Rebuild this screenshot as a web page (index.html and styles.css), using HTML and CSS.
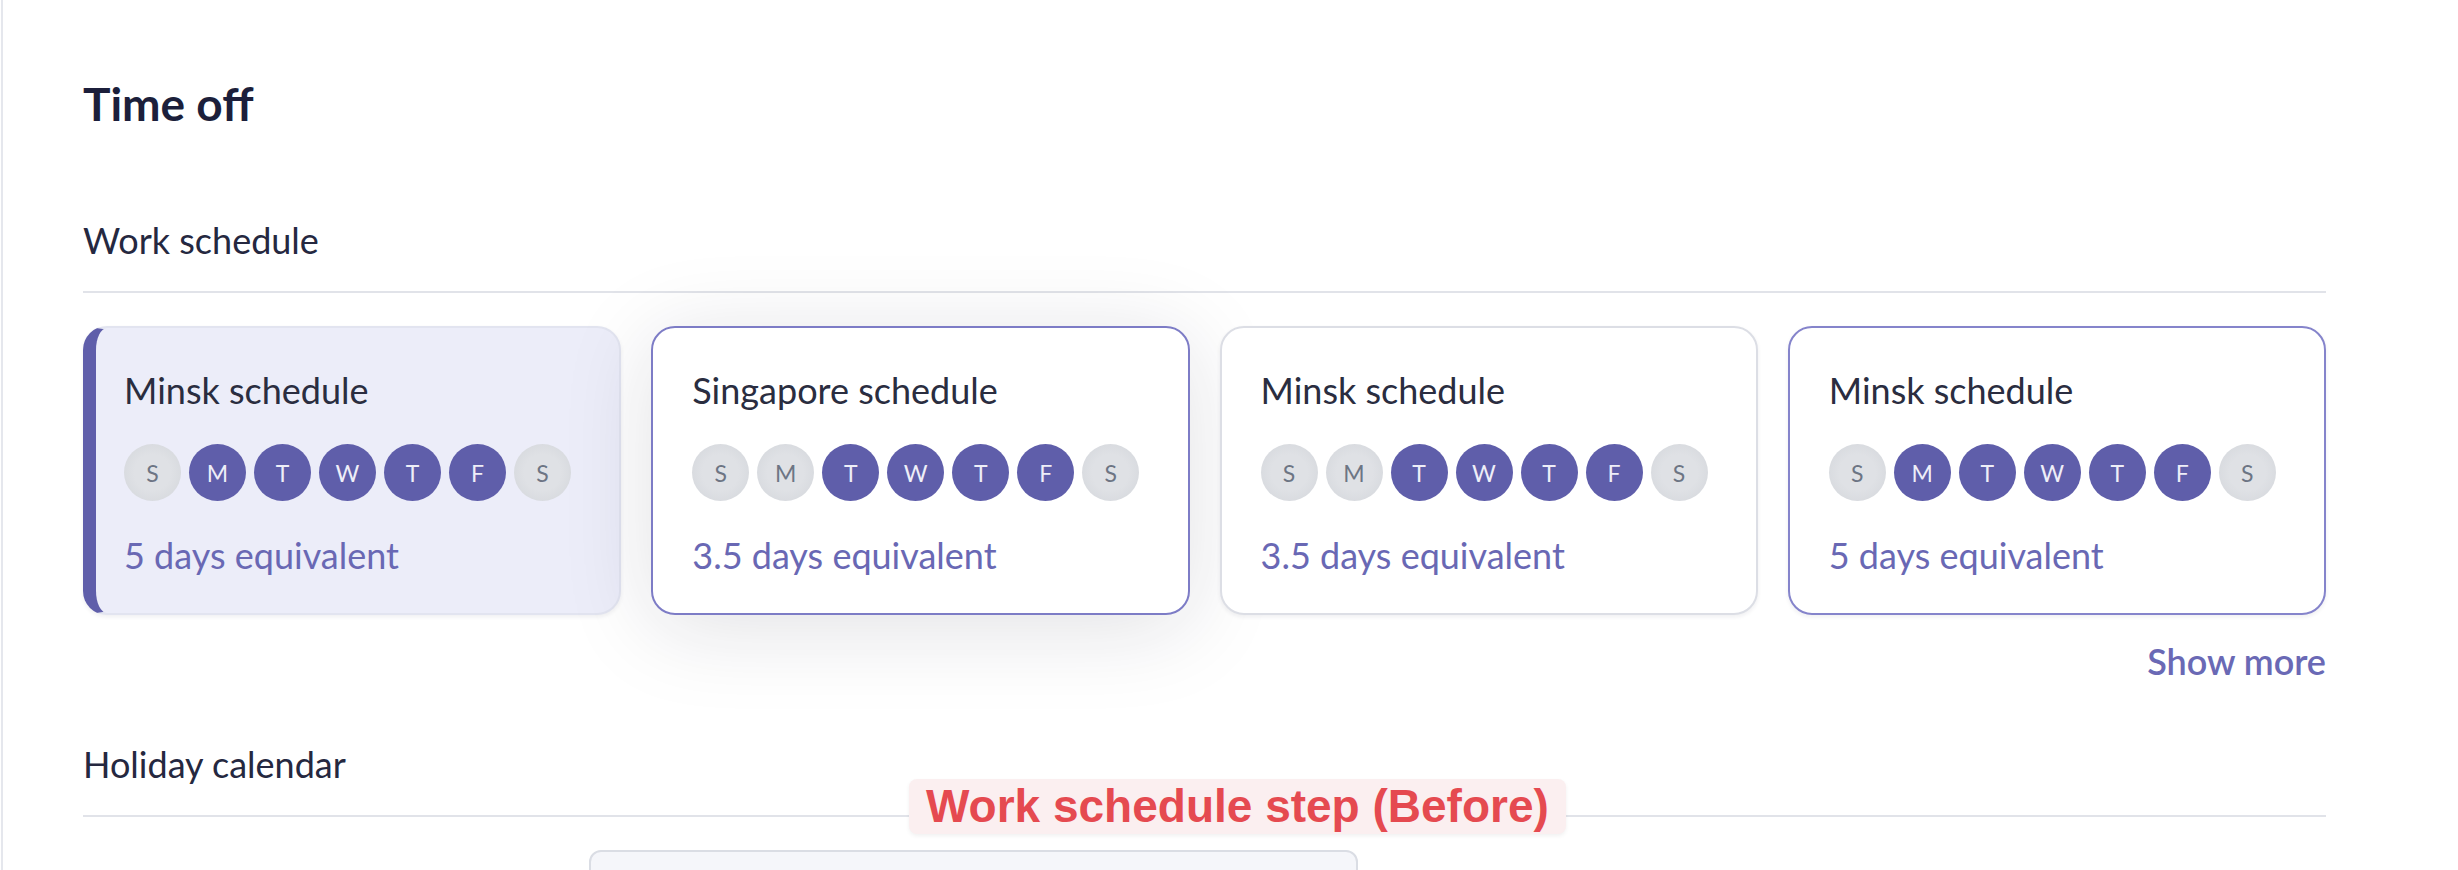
FILE: index.html
```html
<!DOCTYPE html>
<html lang="en">
<head>
  <meta charset="UTF-8" />
  <title>Time off</title>
  <link rel="stylesheet" href="styles.css">
</head>
<body>

  <div class="panel">
    <h1 class="page-title">Time off</h1>

    <!-- Work schedule -->
    <div class="section">
      <div class="section-title">Work schedule</div>

      <div class="schedule-list">
        <div class="schedule-card selected">
          <div class="schedule-name">Minsk schedule</div>
          <div class="days">
            <span class="day">S</span>
            <span class="day on">M</span>
            <span class="day on">T</span>
            <span class="day on">W</span>
            <span class="day on">T</span>
            <span class="day on">F</span>
            <span class="day">S</span>
          </div>
          <div class="schedule-total">5 days equivalent</div>
        </div>

        <div class="schedule-card hovered">
          <div class="schedule-name">Singapore schedule</div>
          <div class="days">
            <span class="day">S</span>
            <span class="day">M</span>
            <span class="day on">T</span>
            <span class="day on">W</span>
            <span class="day on">T</span>
            <span class="day on">F</span>
            <span class="day">S</span>
          </div>
          <div class="schedule-total">3.5 days equivalent</div>
        </div>

        <div class="schedule-card">
          <div class="schedule-name">Minsk schedule</div>
          <div class="days">
            <span class="day">S</span>
            <span class="day">M</span>
            <span class="day on">T</span>
            <span class="day on">W</span>
            <span class="day on">T</span>
            <span class="day on">F</span>
            <span class="day">S</span>
          </div>
          <div class="schedule-total">3.5 days equivalent</div>
        </div>

        <div class="schedule-card outlined">
          <div class="schedule-name">Minsk schedule</div>
          <div class="days">
            <span class="day">S</span>
            <span class="day on">M</span>
            <span class="day on">T</span>
            <span class="day on">W</span>
            <span class="day on">T</span>
            <span class="day on">F</span>
            <span class="day">S</span>
          </div>
          <div class="schedule-total">5 days equivalent</div>
        </div>
      </div>

      <div class="show-more-row">
        <a class="show-more" href="#">Show more</a>
      </div>
    </div>

    <!-- Holiday calendar -->
    <div class="section holiday">
      <div class="section-title">Holiday calendar</div>
      <div class="calendar-box"></div>
      <div class="step-label">Work schedule step (Before)</div>
    </div>
  </div>

</body>
</html>
```

FILE: styles.css
```css
body, html {
  margin: 0;
  padding: 0;
  overflow: hidden;
  background: #ffffff;
  font-family: Lato, "Noto Sans", sans-serif;
  color: #1f2239;
}

.panel {
  margin-left: 1px;
  border-left: 2px solid #e5e7ed;
  height: 870px;
  box-sizing: border-box;
  padding: 75px 132px 0 80px;
}

.page-title {
  margin: 0;
  font-size: 46px;
  line-height: 58px;
  font-weight: 700;
  color: #1c1f3b;
}

.section {
  margin-top: 87px;
}

.section-title {
  font-size: 36px;
  line-height: 40px;
  color: #252840;
  padding-bottom: 31px;
  border-bottom: 2px solid #e1e3e9;
}

.schedule-list {
  display: grid;
  grid-template-columns: repeat(4, 1fr);
  gap: 30px;
  margin-top: 33px;
}

.schedule-card {
  height: 289px;
  box-sizing: border-box;
  padding: 42px 39px 36px;
  background: #ffffff;
  border: 2px solid #dcdee5;
  border-radius: 24px;
  box-shadow: 0 2px 4px rgba(30, 30, 60, 0.07);
}

.schedule-card.selected {
  background: #ecedf9;
  border-color: #e2e4f0;
  border-left: 13px solid #5f5eaa;
  padding-left: 28px;
}

.schedule-card.hovered {
  border-color: #7d7cc6;
  box-shadow: 0 12px 90px rgba(20, 20, 50, 0.13);
}

.schedule-card.outlined {
  border-color: #8584cb;
}

.schedule-name {
  font-size: 36px;
  line-height: 40px;
  color: #2a2d40;
}

.days {
  display: flex;
  gap: 8px;
  margin-top: 34px;
}

.day {
  width: 57px;
  height: 57px;
  border-radius: 50%;
  display: flex;
  justify-content: center;
  align-items: center;
  font-size: 23px;
  color: #6d7584;
  background: radial-gradient(circle, #dfe1e5 45%, #d2d5da 100%);
}

.day.on {
  background: #5f5eaa;
  color: #eeeef8;
}

.schedule-total {
  margin-top: 34px;
  font-size: 36px;
  line-height: 40px;
  color: #6968b4;
}

.show-more-row {
  display: flex;
  justify-content: flex-end;
  margin-top: 26px;
}

.show-more {
  font-size: 36px;
  line-height: 40px;
  font-weight: 600;
  color: #6a69b5;
  text-decoration: none;
}

.section.holiday {
  position: relative;
  margin-top: 63px;
}

.calendar-box {
  width: 769px;
  height: 60px;
  margin: 33px 0 0 506px;
  box-sizing: border-box;
  background: #f5f6fa;
  border: 2px solid #dadde4;
  border-radius: 12px;
}

.step-label {
  position: absolute;
  left: 826px;
  top: 35px;
  height: 55px;
  padding: 0 17px;
  line-height: 55px;
  font-family: "Liberation Sans", Arial, sans-serif;
  font-size: 46px;
  font-weight: 700;
  color: #e54a50;
  background: #fbeff0;
  border-radius: 8px;
  box-shadow: 0 2px 4px rgba(0, 0, 0, 0.06);
}
```
